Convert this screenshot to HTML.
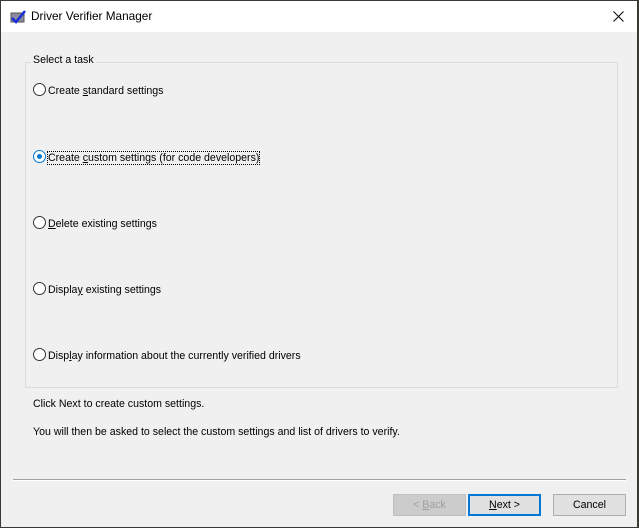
<!DOCTYPE html>
<html><head><style>
body{margin:0;width:639px;height:528px;background:#3a3a34;position:relative;overflow:hidden;font-family:"Liberation Sans",sans-serif;font-size:10.6px;color:#000}
.win{position:absolute;left:1px;top:1px;width:636px;height:526px;background:#f0f0f0}
.title{position:absolute;left:0;top:0;width:636px;height:31px;background:#fff}
.t{position:absolute;left:30px;top:8px;font-size:11.8px}
.gb{position:absolute;left:24px;top:61px;width:591px;height:324px;border:1px solid #dcdcdc}
.gl{position:absolute;left:30px;top:53px;background:#f0f0f0;padding:0 2px}
.r{position:absolute;left:32px}
.r i{display:inline-block;width:11px;height:11px;border:1px solid #333;border-radius:50%;vertical-align:-2px;margin-right:2px;background:#fff;position:relative}
.r i.s{border-color:#0078d7}
.r i.s:after{content:"";position:absolute;left:3px;top:3px;width:5px;height:5px;border-radius:50%;background:#0078d7}
.p{position:absolute;left:32px}
.sep{position:absolute;left:12px;top:478px;width:613px;border-top:1px solid #a0a0a0;border-bottom:1px solid #fff}
.b{position:absolute;top:493px;height:20px;width:71px;border:1px solid #adadad;background:#e1e1e1;text-align:center;line-height:20px}
</style></head><body><div class="win">
<div class="title">
<svg style="position:absolute;left:9px;top:9px" width="16" height="14"><rect x="1" y="3" width="13" height="9" fill="#8a8aa0" stroke="#555"/><path d="M2 8 L6 12 L15 1" stroke="#1a2ed8" stroke-width="2.5" fill="none"/></svg>
<div class="t">Driver Verifier Manager</div>
<svg style="position:absolute;left:612px;top:10px" width="11" height="11"><path d="M0.5 0.5L10.5 10.5M10.5 0.5L0.5 10.5" stroke="#000" stroke-width="1"/></svg></div>
<div class="gb"></div><div class="gl">Select a task</div>
<div class="r" style="top:82px"><i></i>Create <u>s</u>tandard settings</div>
<div class="r" style="top:149px"><i class="s"></i><span style="outline:1px dotted #000">Create <u>c</u>ustom settings (for code developers)</span></div>
<div class="r" style="top:215px"><i></i><u>D</u>elete existing settings</div>
<div class="r" style="top:281px"><i></i>Displa<u>y</u> existing settings</div>
<div class="r" style="top:347px"><i></i>Disp<u>l</u>ay information about the currently verified drivers</div>
<div class="p" style="top:397px">Click Next to create custom settings.</div>
<div class="p" style="top:425px">You will then be asked to select the custom settings and list of drivers to verify.</div>
<div class="sep"></div>
<div class="b" style="left:392px;color:#a0a0a0;background:#ccc;border-color:#bfbfbf">&lt; <u>B</u>ack</div>
<div class="b" style="left:467px;border:2px solid #0078d7;height:18px;width:69px;line-height:18px"><u>N</u>ext &gt;</div>
<div class="b" style="left:552px">Cancel</div>
</div></body></html>
